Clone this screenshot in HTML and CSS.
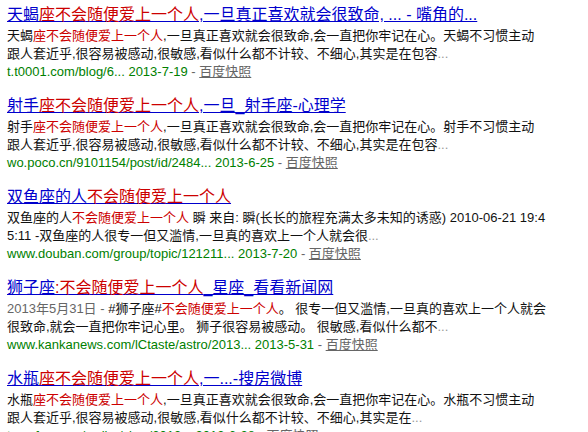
FILE: index.html
```html
<!DOCTYPE html>
<html lang="zh-CN">
<head>
<meta charset="utf-8">
<link rel="stylesheet" href="styles.css">
</head>
<body>
<div class="results">
  <div class="result">
    <a class="title" href="#">天蝎<em>座不会随便爱上一个人</em>,一旦真正喜欢就会很致命, ... - 嘴角的...</a>
    <div class="abs">天蝎<em>座不会随便爱上一个人</em>,一旦真正喜欢就会很致命,会一直把你牢记在心。天蝎不习惯主动<br>跟人套近乎,很容易被感动,很敏感,看似什么都不计较、不细心,其实是在包容<span class="dots">...</span></div>
    <div class="meta"><span class="url">t.t0001.com/blog/6... 2013-7-19 </span> - <a class="cache" href="#">百度快照</a></div>
  </div>
  <div class="result">
    <a class="title" href="#">射手<em>座不会随便爱上一个人</em>,一旦_射手座-心理学</a>
    <div class="abs">射手<em>座不会随便爱上一个人</em>,一旦真正喜欢就会很致命,会一直把你牢记在心。射手不习惯主动<br>跟人套近乎,很容易被感动,很敏感,看似什么都不计较、不细心,其实是在包容<span class="dots">...</span></div>
    <div class="meta"><span class="url">wo.poco.cn/9101154/post/id/2484... 2013-6-25 </span> - <a class="cache" href="#">百度快照</a></div>
  </div>
  <div class="result">
    <a class="title" href="#">双鱼座的人<em>不会随便爱上一个人</em></a>
    <div class="abs">双鱼座的人<em>不会随便爱上一个人</em> 瞬 来自: 瞬(长长的旅程充满太多未知的诱惑) 2010-06-21 19:4<br>5:11 -双鱼座的人很专一但又滥情,一旦真的喜欢上一个人就会很<span class="dots">...</span></div>
    <div class="meta"><span class="url">www.douban.com/group/topic/121211... 2013-7-20 </span> - <a class="cache" href="#">百度快照</a></div>
  </div>
  <div class="result">
    <a class="title" href="#">狮子座<em>:不会随便爱上一个人</em>_星座_看看新闻网</a>
    <div class="abs"><span class="date">2013年5月31日 - </span>#狮子座#<em>不会随便爱上一个人</em>。 很专一但又滥情,一旦真的喜欢上一个人就会<br>很致命,就会一直把你牢记心里。 狮子很容易被感动。 很敏感,看似什么都不<span class="dots">...</span></div>
    <div class="meta"><span class="url">www.kankanews.com/lCtaste/astro/2013... 2013-5-31 </span> - <a class="cache" href="#">百度快照</a></div>
  </div>
  <div class="result">
    <a class="title" href="#">水瓶<em>座不会随便爱上一个人</em>,一...-搜房微博</a>
    <div class="abs">水瓶<em>座不会随便爱上一个人</em>,一旦真正喜欢就会很致命,会一直把你牢记在心。水瓶不习惯主动<br>跟人套近乎,很容易被感动,很敏感,看似什么都不计较、不细心,其实是在<span class="dots">...</span></div>
    <div class="meta"><span class="url">t.soufun.com/weibo/view/2013... 2013-6-28 </span> - <a class="cache" href="#">百度快照</a></div>
  </div>
</div>
</body>
</html>
```
FILE: styles.css
```css
html, body {
  margin: 0;
  padding: 0;
  background: #fff;
}
body {
  font-family: "Liberation Sans", "Noto Sans CJK SC", sans-serif;
  overflow: hidden;
}
.results {
  padding: 5px 0 0 7px;
  width: 575px;
}
.result {
  margin-bottom: 15px;
}
.title {
  display: block;
  font-size: 16px;
  line-height: 20px;
  color: #0000cc;
  text-decoration: underline;
  margin-bottom: 2px;
  white-space: nowrap;
}
em {
  font-style: normal;
  color: #cc0000;
}
.abs {
  font-size: 13px;
  line-height: 18px;
  color: #111;
  white-space: nowrap;
}
.dots {
  color: #999;
}
.date {
  color: #666;
}
.meta {
  font-size: 13px;
  line-height: 18px;
  color: #666;
}
.url {
  color: #008000;
}
.cache {
  color: #666;
  text-decoration: underline;
}
```
